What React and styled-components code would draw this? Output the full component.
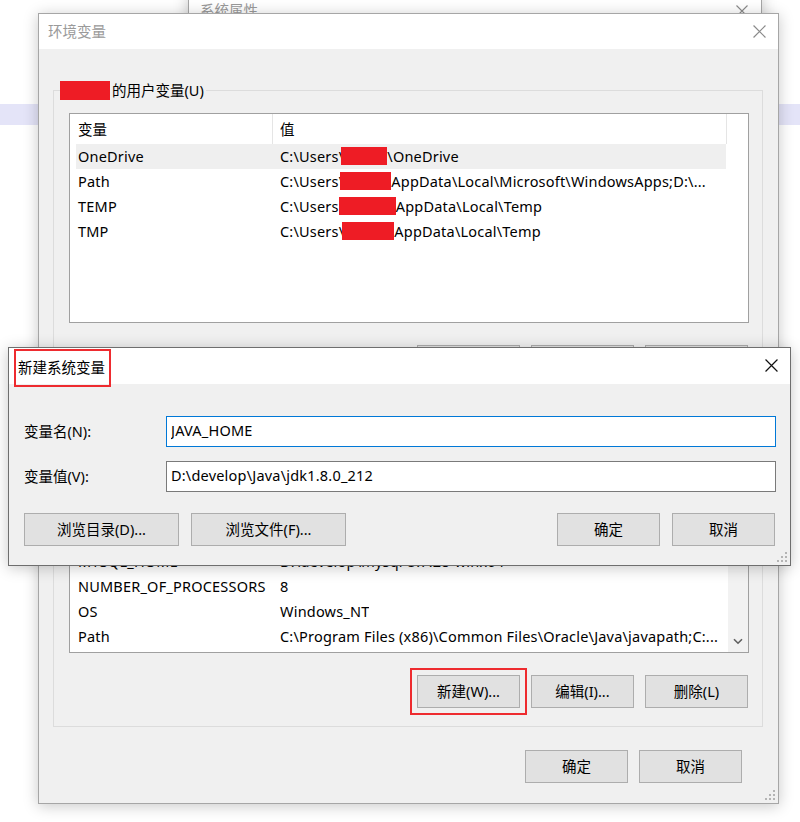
import styled, { createGlobalStyle } from "styled-components"

const GlobalStyle = createGlobalStyle`
  html, body {
    margin: 0;
    padding: 0;
  }
  body {
    width: 800px;
    height: 822px;
    overflow: hidden;
    font-family: "Noto Sans", "Noto Sans CJK SC", sans-serif;
    font-size: 14.5px;
    color: #000;
  }
  * {
    box-sizing: border-box;
  }
`;

const userVars = [
  { name: 'OneDrive', pre: 'C:\\Users\\', redact: 46, shift: -3, post: '\\OneDrive', selected: true },
  { name: 'Path', pre: 'C:\\Users\\', redact: 51, shift: -4, post: 'AppData\\Local\\Microsoft\\WindowsApps;D:\\...' },
  { name: 'TEMP', pre: 'C:\\Users', redact: 57, shift: 0, post: 'AppData\\Local\\Temp' },
  { name: 'TMP', pre: 'C:\\Users\\', redact: 52, shift: -2, post: 'AppData\\Local\\Temp' },
];

const systemVars = [
  { name: 'ComSpec', value: 'C:\\WINDOWS\\system32\\cmd.exe' },
  { name: 'DriverData', value: 'C:\\Windows\\System32\\Drivers\\DriverData' },
  { name: 'JRE_HOME', value: 'D:\\develop\\Java\\jre1.8.0_212' },
  { name: 'MYSQL_HOME', value: 'D:\\develop\\mysql-5.7.28-winx64' },
  { name: 'NUMBER_OF_PROCESSORS', value: '8' },
  { name: 'OS', value: 'Windows_NT' },
  { name: 'Path', value: 'C:\\Program Files (x86)\\Common Files\\Oracle\\Java\\javapath;C:...' },
];

function CloseIcon({ color, size = 12 }) {
  return (
    <svg width={size} height={size} viewBox="0 0 12 12">
      <path d="M0.5 0.5L11.5 11.5M11.5 0.5L0.5 11.5" stroke={color} strokeWidth="1.1" fill="none" />
    </svg>
  );
}

function Grip() {
  return (
    <GripSC>
      <svg width="10" height="10" viewBox="0 0 10 10" fill="#b4b4b4">
        <rect x="8" y="0" width="2" height="2" />
        <rect x="4" y="4" width="2" height="2" />
        <rect x="8" y="4" width="2" height="2" />
        <rect x="0" y="8" width="2" height="2" />
        <rect x="4" y="8" width="2" height="2" />
        <rect x="8" y="8" width="2" height="2" />
      </svg>
    </GripSC>
  );
}

function ListHeader() {
  return (
    <HeaderSC>
      <HeaderCell $w={203} $pl={8}>变量</HeaderCell>
      <HeaderCell $w={454} $pl={7}>值</HeaderCell>
    </HeaderSC>
  );
}

export default function App() {
  return (
    <Desktop>
      <GlobalStyle />

      <Window $x={188} $y={-8} $w={574} $h={300}>
        <TitleBar $h={36}>
          <Title $pl={11} $color="#9a9a9a">系统属性</Title>
          <CloseButton $w={38}><CloseIcon color="#8a8a8a" /></CloseButton>
        </TitleBar>
      </Window>

      <Window $x={38} $y={13} $w={741}>
        <TitleBar $h={35}>
          <Title $pl={9} $color="#9a9a9a">环境变量</Title>
          <CloseButton $w={38}><CloseIcon color="#8a8a8a" size={13} /></CloseButton>
        </TitleBar>

        <EnvBody>
          <Group>
            <Legend>
              <Redact $w={50} $h={19} $mr={2} />
              的用户变量(U)
            </Legend>
            <ListView>
              <ListBody>
                <ListHeader />
                {userVars.map(v => (
                  <Row key={v.name} $selected={v.selected}>
                    <Cell $w={202}>{v.name}</Cell>
                    <Cell>
                      {v.pre}
                      <Redact $w={v.redact} $h={18} $ml={v.shift} />
                      {v.post}
                    </Cell>
                  </Row>
                ))}
              </ListBody>
            </ListView>
            <ButtonRow>
              <Button $w={103}>新建(N)...</Button>
              <Button $w={103}>编辑(E)...</Button>
              <Button $w={103}>删除(D)</Button>
            </ButtonRow>
          </Group>

          <Group $mt={13}>
            <Legend>系统变量(S)</Legend>
            <ListView>
              <ListBody>
                <ListHeader />
                {systemVars.map(v => (
                  <Row key={v.name}>
                    <Cell $w={202}>{v.name}</Cell>
                    <Cell>{v.value}</Cell>
                  </Row>
                ))}
              </ListBody>
              <ScrollBar>
                <svg width="10" height="7" viewBox="0 0 10 7">
                  <path d="M1 1.2L5 5.2L9 1.2" stroke="#606060" strokeWidth="1.6" fill="none" />
                </svg>
              </ScrollBar>
            </ListView>
            <ButtonRow>
              <Button $w={103} $marked>新建(W)...</Button>
              <Button $w={103}>编辑(I)...</Button>
              <Button $w={103}>删除(L)</Button>
            </ButtonRow>
          </Group>

          <ButtonRow $mr={21} $mt={23}>
            <Button $w={103}>确定</Button>
            <Button $w={103}>取消</Button>
          </ButtonRow>
        </EnvBody>
        <Grip />
      </Window>

      <Window $x={8} $y={347} $w={783} $active>
        <TitleBar $h={36}>
          <TitleMark>新建系统变量</TitleMark>
          <CloseButton $w={38}><CloseIcon color="#111" size={13} /></CloseButton>
        </TitleBar>

        <DialogBody>
          <FieldRow>
            <FieldLabel>变量名(N):</FieldLabel>
            <Input $focused readOnly value="JAVA_HOME" />
          </FieldRow>
          <FieldRow>
            <FieldLabel>变量值(V):</FieldLabel>
            <Input readOnly value="D:\develop\Java\jdk1.8.0_212" />
          </FieldRow>
          <DialogButtons>
            <Button $w={155}>浏览目录(D)...</Button>
            <Button $w={155}>浏览文件(F)...</Button>
            <Spacer />
            <Button $w={103}>确定</Button>
            <Button $w={103}>取消</Button>
          </DialogButtons>
        </DialogBody>
        <Grip />
      </Window>
    </Desktop>
  )
}

const Desktop = styled.div`
  position: relative;
  width: 800px;
  height: 822px;
  overflow: hidden;
  background: linear-gradient(
    to bottom,
    #fff 0,
    #fff 104px,
    #e4e4f8 104px,
    #e4e4f8 125px,
    #fff 125px
  );
`;

const Window = styled.div`
  position: absolute;
  left: ${props => props.$x}px;
  top: ${props => props.$y}px;
  width: ${props => props.$w}px;
  height: ${props => props.$h ? `${props.$h}px` : 'auto'};
  display: flex;
  flex-direction: column;
  background: #f0f0f0;
  border: 1px solid ${props => props.$active ? '#6e6e6e' : '#a6a6a6'};
  box-shadow: 0 2px 14px rgba(0, 0, 0, 0.22);
`;

const TitleBar = styled.div`
  display: flex;
  align-items: center;
  justify-content: space-between;
  height: ${props => props.$h}px;
  flex-shrink: 0;
  background: #fff;
`;

const Title = styled.span`
  padding-left: ${props => props.$pl}px;
  padding-bottom: 3px;
  color: ${props => props.$color};
  font-size: 14.5px;
  user-select: none;
`;

const TitleMark = styled.span`
  position: relative;
  z-index: 1;
  align-self: flex-start;
  display: flex;
  align-items: center;
  height: 38px;
  margin-top: 1px;
  margin-left: 5px;
  padding: 0 4px 4px 2px;
  border: 2px solid #ee2b2f;
  font-size: 14.5px;
`;

const CloseButton = styled.span`
  display: flex;
  align-items: center;
  justify-content: center;
  width: ${props => props.$w}px;
  height: 100%;
  padding-bottom: 1px;
`;

const EnvBody = styled.div`
  display: flex;
  flex-direction: column;
  padding: 31px 15px 20px 14px;
`;

const Group = styled.fieldset`
  margin: ${props => props.$mt || 0}px 0 0 0;
  padding: 13px 13px 18px 15px;
  border: 1px solid #dcdcdc;
  min-width: 0;
`;

const Legend = styled.legend`
  display: flex;
  align-items: center;
  height: 20px;
  margin-left: -9px;
  padding: 0 2px 0 0;
  line-height: 20px;
  font-size: 14.5px;
`;

const Redact = styled.span`
  display: inline-block;
  flex-shrink: 0;
  width: ${props => props.$w}px;
  height: ${props => props.$h}px;
  margin-left: ${props => props.$ml || 0}px;
  margin-right: ${props => props.$mr || 0}px;
  vertical-align: middle;
  background: #ee1c25;
`;

const ListView = styled.div`
  display: flex;
  height: 210px;
  background: #fff;
  border: 1px solid #a0a0a0;
  overflow: hidden;
`;

const ListBody = styled.div`
  display: flex;
  flex-direction: column;
  flex: 1;
  min-width: 0;
`;

const HeaderSC = styled.div`
  display: flex;
  height: 30px;
  flex-shrink: 0;
`;

const HeaderCell = styled.div`
  display: flex;
  align-items: center;
  width: ${props => props.$w}px;
  padding-left: ${props => props.$pl}px;
  padding-bottom: 2px;
  border-right: 1px solid #e5e5e5;
`;

const Row = styled.div`
  display: flex;
  align-items: center;
  height: 25px;
  flex-shrink: 0;
  width: 650px;
  margin-left: 6px;
  padding-bottom: 1px;
  background: ${props => props.$selected ? '#efefef' : 'transparent'};
  white-space: nowrap;
`;

const Cell = styled.span`
  display: flex;
  align-items: center;
  width: ${props => props.$w ? `${props.$w}px` : 'auto'};
  padding-left: 2px;
  letter-spacing: 0.2px;
  white-space: nowrap;
  overflow: hidden;
`;

const ScrollBar = styled.div`
  display: flex;
  flex-direction: column;
  justify-content: flex-end;
  align-items: center;
  width: 20px;
  padding-bottom: 7px;
  background: #f2f2f2;
`;

const ButtonRow = styled.div`
  display: flex;
  justify-content: flex-end;
  gap: 11px;
  margin-top: ${props => props.$mt || 22}px;
  margin-right: ${props => props.$mr || 1}px;
`;

const Button = styled.button`
  width: ${props => props.$w}px;
  height: 33px;
  padding: 0 0 3px 0;
  background: #e1e1e1;
  border: 1px solid #adadad;
  border-radius: 0;
  font-family: inherit;
  font-size: 14.5px;
  color: #000;
  outline: ${props => props.$marked ? '2px solid #ee2b2f' : 'none'};
  outline-offset: 5px;
`;

const DialogBody = styled.div`
  display: flex;
  flex-direction: column;
  gap: 14px;
  padding: 32px 14px 19px 15px;
`;

const FieldRow = styled.div`
  display: flex;
  align-items: center;
`;

const FieldLabel = styled.span`
  width: 142px;
  flex-shrink: 0;
  padding-bottom: 3px;
  font-size: 14.5px;
`;

const Input = styled.input`
  flex: 1;
  height: 31px;
  padding: 0 4px 3px 4px;
  background: #fff;
  border: 1px solid ${props => props.$focused ? '#0078d7' : '#7a7a7a'};
  border-radius: 0;
  font-family: inherit;
  font-size: 14.5px;
  letter-spacing: 0.2px;
  color: #000;
  outline: none;
`;

const DialogButtons = styled.div`
  display: flex;
  gap: 12px;
  margin-top: 7px;
  padding-right: 1px;
`;

const Spacer = styled.div`
  flex: 1;
`;

const GripSC = styled.span`
  position: absolute;
  right: 3px;
  bottom: 3px;
  display: flex;
`;
